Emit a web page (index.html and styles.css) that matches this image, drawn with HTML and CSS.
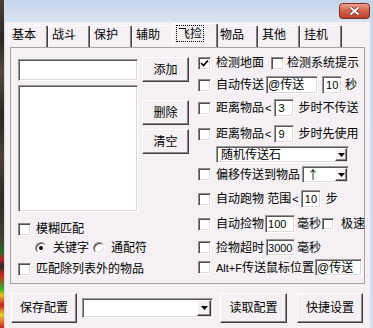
FILE: index.html
```html
<!DOCTYPE html>
<html>
<head>
<meta charset="utf-8">
<link rel="stylesheet" href="styles.css">
</head>
<body>
<div class="edge"></div>
<div class="win">
  <div class="titlebar">
    <div class="close">
      <svg width="31" height="16" viewBox="0 0 31 16">
        <defs><linearGradient id="cg" x1="0" y1="0" x2="0" y2="1"><stop offset="0" stop-color="#eaa898"/><stop offset="0.45" stop-color="#d4664e"/><stop offset="1" stop-color="#b83c2a"/></linearGradient></defs>
        <rect x="0.5" y="0.5" width="30" height="15" rx="3" fill="url(#cg)" stroke="#7e2a1e"/>
        <path d="M11.5 4.5 L19.5 11.5 M19.5 4.5 L11.5 11.5" stroke="#74281c" stroke-width="3.6"/>
        <path d="M11.5 4.5 L19.5 11.5 M19.5 4.5 L11.5 11.5" stroke="#fff" stroke-width="2"/>
      </svg>
    </div>
  </div>
  <div class="tabs">
    <div class="tab first">基本</div>
    <div class="tab">战斗</div>
    <div class="tab">保护</div>
    <div class="tab">辅助</div>
    <div class="tab sel"><span class="focus">飞捡</span></div>
    <div class="tab">物品</div>
    <div class="tab">其他</div>
    <div class="tab">挂机</div>
  </div>
  <div class="frame">
    <div class="lcol">
      <div class="lrow1">
        <div class="edit e-key"></div>
        <div class="btn b-side">添加</div>
      </div>
      <div class="lrow2">
        <div class="edit listbox"></div>
        <div class="sidebtns">
          <div class="btn b-side">删除</div>
          <div class="btn b-side">清空</div>
        </div>
      </div>
      <div class="lchk first-chk"><span class="cb"></span><span>模糊匹配</span></div>
      <div class="lrad"><span class="rb on"></span><span>关键字</span><span class="rb rb2"></span><span>通配符</span></div>
      <div class="lchk last-chk"><span class="cb"></span><span>匹配除列表外的物品</span></div>
    </div>
    <div class="rcol">
      <div class="row r1">
        <span class="cb on"><svg width="9" height="9" viewBox="0 0 9 9"><path d="M1 4 L3.5 6.5 L8 1.5" fill="none" stroke="#000" stroke-width="1.7"/></svg></span>
        <span>检测地面</span>
        <span class="cb cb-r1"></span>
        <span>检测系统提示</span>
      </div>
      <div class="row r2">
        <span class="cb"></span><span>自动传送</span>
        <div class="edit in-tele">@传送</div>
        <div class="edit in-sec lat">10</div>
        <span class="u-sec">秒</span>
      </div>
      <div class="row r3">
        <span class="cb"></span><span>距离物品<span class="lt">&lt;</span></span>
        <div class="edit in-dist lat">3</div>
        <span class="u-step">步时不传送</span>
      </div>
      <div class="row r4">
        <span class="cb"></span><span>距离物品<span class="lt">&lt;</span></span>
        <div class="edit in-dist lat">9</div>
        <span class="u-step">步时先使用</span>
      </div>
      <div class="row r5">
        <div class="edit combo c-stone"><span class="ctext">随机传送石</span><span class="cbtn"><svg width="7" height="4" viewBox="0 0 7 4"><polygon points="0,0 7,0 3.5,4" fill="#000"/></svg></span></div>
      </div>
      <div class="row r6">
        <span class="cb"></span><span>偏移传送到物品</span>
        <div class="edit combo c-dir"><span class="ctext arrow">↑</span><span class="cbtn"><svg width="7" height="4" viewBox="0 0 7 4"><polygon points="0,0 7,0 3.5,4" fill="#000"/></svg></span></div>
      </div>
      <div class="row r7">
        <span class="cb"></span><span>自动跑物 范围<span class="lt">&lt;</span></span>
        <div class="edit in-run lat">10</div>
        <span class="u-run">步</span>
      </div>
      <div class="row r8">
        <span class="cb"></span><span>自动捡物</span>
        <div class="edit in-ms lat">100</div>
        <span class="u-ms">毫秒</span>
        <span class="cb cb-fast"></span>
        <span>极速</span>
      </div>
      <div class="row r9">
        <span class="cb"></span><span>捡物超时</span>
        <div class="edit in-to lat">3000</div>
        <span class="u-ms">毫秒</span>
      </div>
      <div class="row r10">
        <span class="cb"></span><span><span class="lat">Alt+F</span>传送鼠标位置</span>
        <div class="edit in-alt">@传送</div>
      </div>
    </div>
  </div>
  <div class="bottom">
    <div class="btn b-big b-save">保存配置</div>
    <div class="edit combo c-cfg"><span class="ctext"></span><span class="cbtn"><svg width="7" height="4" viewBox="0 0 7 4"><polygon points="0,0 7,0 3.5,4" fill="#000"/></svg></span></div>
    <div class="btn b-big b-load">读取配置</div>
    <div class="btn b-big b-quick">快捷设置</div>
  </div>
</div>
<div class="rborder"></div>
</body>
</html>
```
FILE: styles.css
```css
* { box-sizing: border-box; }
html, body { margin: 0; padding: 0; }
body {
  width: 373px;
  height: 328px;
  overflow: hidden;
  display: flex;
  background: #f4f0f4;
  color: #000;
  font-family: "Liberation Sans", "Noto Sans CJK SC", sans-serif;
  font-size: 12px;
  line-height: 14px;
}
.lat { font-size: 11px; }
.lt { font-size: 11px; margin-left: 1px; }
.arrow { font-family: "Noto Sans CJK SC", "DejaVu Sans", sans-serif; font-size: 12px; }

.edge {
  width: 5px;
  flex: none;
  border-right: 1px solid #d8dce6;
  background: linear-gradient(to bottom,
    #4a3f36 0, #2c2824 12%, #55483c 22%, #2a2622 35%, #4c4036 48%, #2e2a26 60%,
    #453a30 72%, #2a6a2a 77%, #c82020 79%, #2a2a2a 81%, #d02818 84%, #30b030 88%,
    #e0c020 90%, #c81c1c 93%, #e8d030 96%, #c82020 100%);
}
.win {
  width: 365px;
  flex: none;
  display: flex;
  flex-direction: column;
  background: #f4f0f4;
}
.rborder {
  flex: 1;
  background: linear-gradient(#c9d7ec, #d4e0f0);
}

.titlebar {
  height: 22px;
  flex: none;
  display: flex;
  justify-content: flex-end;
  align-items: flex-start;
  padding-top: 3px;
  background: linear-gradient(#c6d5eb, #d8e3f1);
}
.close { width: 31px; height: 16px; }
.close svg { display: block; }

.tabs {
  height: 25px;
  flex: none;
  display: flex;
  align-items: flex-end;
  padding-left: 3px;
}
.tab {
  width: 42px;
  height: 22px;
  flex: none;
  border-top: 1px solid #fff;
  border-left: 1px solid #fff;
  border-right: 1px solid #404040;
  box-shadow: inset -1px 0 #808080;
  border-radius: 2px 2px 0 0;
  padding: 2px 0 0 3px;
  white-space: nowrap;
}
.tab.first { width: 40px; }
.tab.sel {
  position: relative;
  z-index: 1;
  width: 46px;
  height: 24px;
  margin: 0 -2px;
  padding: 1px 0 0 3px;
  background: #f4f0f4;
}
.focus {
  display: inline-block;
  border: 1px dotted #000;
  padding: 1px 1px 0 1px;
  height: 17px;
}

.frame {
  margin-left: 5px;
  width: 355px;
  height: 237px;
  flex: none;
  border: 1px solid #a4a0a4;
  display: flex;
}

/* generic controls */
.edit {
  background: #fff;
  border: 1px solid;
  border-color: #9a9a9a #fff #fff #9a9a9a;
  box-shadow: inset 1px 1px #5a5a5a, inset -1px -1px #dcd8dc;
  flex: none;
}
.btn {
  flex: none;
  background: #f4f0f4;
  border: 1px solid;
  border-color: #fff #404040 #404040 #fff;
  box-shadow: inset -1px -1px #888;
  display: flex;
  align-items: center;
  justify-content: center;
  white-space: nowrap;
}
.cb {
  width: 13px;
  height: 13px;
  flex: none;
  margin-right: 5px;
  background: #fff;
  border: 1px solid;
  border-color: #8a8a8a #fff #fff #8a8a8a;
  box-shadow: inset 1px 1px #505050, inset -1px -1px #dcd8dc;
  display: flex;
  align-items: center;
  justify-content: center;
}
.cb svg { display: block; }
.rb {
  width: 12px;
  height: 12px;
  flex: none;
  margin-right: 6px;
  border-radius: 50%;
  background: #fff;
  border: 1px solid;
  border-color: #8a8a8a #fff #fff #8a8a8a;
  box-shadow: inset 1px 1px #505050, inset -1px -1px #dcd8dc;
  display: flex;
  align-items: center;
  justify-content: center;
}
.rb.on::after {
  content: "";
  width: 4px;
  height: 4px;
  border-radius: 50%;
  background: #000;
}
.rb2 { margin-left: 4px; }

.combo {
  display: flex;
  align-items: center;
  justify-content: space-between;
  padding: 0 1px 0 4px;
  white-space: nowrap;
}
.cbtn {
  width: 12px;
  height: 13px;
  flex: none;
  background: #f4f0f4;
  border: 1px solid;
  border-color: #fff #404040 #404040 #fff;
  box-shadow: inset -1px -1px #888;
  display: flex;
  align-items: center;
  justify-content: center;
}
.cbtn svg { display: block; }

/* left column */
.lcol {
  width: 178px;
  flex: none;
  padding: 9px 0 0 7px;
  display: flex;
  flex-direction: column;
}
.lrow1 {
  display: flex;
  align-items: center;
  height: 25px;
}
.e-key { width: 120px; height: 22px; }
.b-side { width: 47px; height: 25px; margin-left: 4px; }
.lrow2 {
  display: flex;
  margin-top: 3px;
}
.listbox { width: 120px; height: 127px; }
.sidebtns {
  display: flex;
  flex-direction: column;
  gap: 4px;
  padding-top: 15px;
}
.lchk, .lrad {
  display: flex;
  align-items: center;
  height: 14px;
  white-space: nowrap;
}
.first-chk { margin-top: 10px; }
.lrad { margin-top: 5px; padding-left: 17px; }
.last-chk { margin-top: 7px; }

/* right column */
.rcol {
  flex: 1;
  padding: 6px 0 0 9px;
  display: flex;
  flex-direction: column;
}
.row {
  display: flex;
  align-items: center;
  height: 18px;
  white-space: nowrap;
}
.r1 { margin-top: 0; }
.cb-r1 { margin-left: 7px; margin-right: 3px; }
.r2 { margin-top: 4px; }
.in-tele { width: 52px; height: 18px; margin-left: 2px; padding-left: 1px; }
.in-sec { width: 20px; height: 18px; margin-left: 4px; padding-left: 3px; }
.u-sec { margin-left: 3px; }
.r3 { margin-top: 5px; }
.r4 { margin-top: 8px; }
.in-dist { width: 20px; height: 18px; margin-left: 3px; padding-left: 3px; }
.u-step { margin-left: 4px; }
.r5 { margin-top: 3px; height: 17px; }
.c-stone { width: 133px; height: 17px; margin-left: 18px; }
.r6 { margin-top: 3px; height: 17px; }
.c-dir { width: 47px; height: 17px; margin-left: 2px; }
.r7 { margin-top: 7px; }
.in-run { width: 20px; height: 18px; margin-left: 2px; padding-left: 3px; }
.u-run { margin-left: 5px; }
.r8 { margin-top: 7px; }
.in-ms { width: 30px; height: 18px; margin-left: 1px; padding-left: 2px; }
.u-ms { margin-left: 2px; }
.cb-fast { width: 12px; height: 12px; margin-left: 1px; margin-right: 7px; }
.r9 { margin-top: 6px; height: 17px; }
.in-to { width: 29px; height: 17px; margin-left: 2px; padding-left: 1px; }
.r10 { margin-top: 3px; height: 17px; }
.in-alt { width: 47px; height: 17px; margin-left: 1px; padding-left: 1px; }

.in-tele, .in-sec, .in-dist, .in-run, .in-ms, .in-to, .in-alt {
  display: flex;
  align-items: center;
  white-space: nowrap;
}

/* bottom */
.bottom {
  display: flex;
  align-items: center;
  margin-top: 9px;
  padding-left: 6px;
  height: 30px;
}
.b-big { height: 30px; }
.b-save { width: 66px; }
.c-cfg { width: 131px; height: 20px; margin-left: 5px; }
.c-cfg .cbtn { width: 14px; height: 16px; }
.b-load { width: 67px; margin-left: 7px; }
.b-quick { width: 66px; margin-left: 10px; }
```
